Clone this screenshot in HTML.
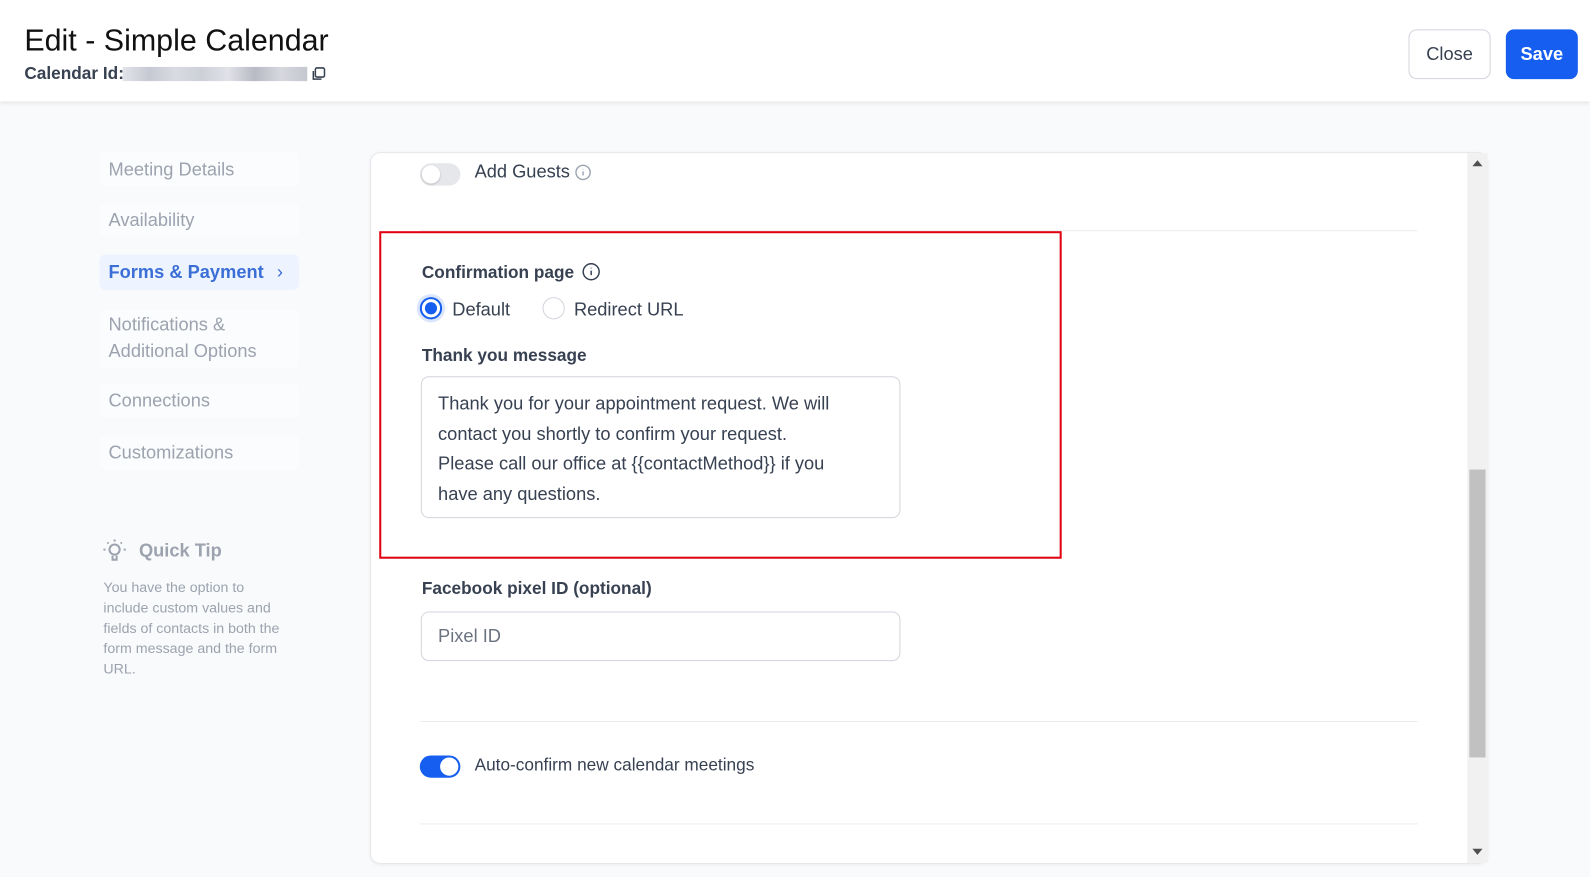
<!DOCTYPE html>
<html><head><style>
*{box-sizing:border-box;margin:0;padding:0}
body{width:1590px;height:877px;overflow:hidden;background:#f9fafb;font-family:"Liberation Sans",sans-serif;position:relative;color:#1f2937}
#w{position:absolute;left:0;top:0;width:1568px;height:865px;transform:scale(1.01403);transform-origin:0 0}
.hdr{position:absolute;left:0;top:0;width:1568px;height:100px;background:#fff;box-shadow:0 2px 4px rgba(0,0,0,.08)}
.abs{position:absolute}
.nav{position:absolute;left:98px;width:197px;background:#fbfcfd;border-radius:6px;color:#9ca3af;font-size:18px;padding:0 9px;line-height:26px}
.card{position:absolute;left:365px;top:150px;width:1102px;height:702px;background:#fff;border:1px solid #e5e7eb;border-radius:10px;box-shadow:0 1px 3px rgba(0,0,0,.06)}
.lbl{font-size:17px;color:#374151;font-weight:bold}
.txt{font-size:18px;color:#374151}
</style></head><body><div id="w">
<div class="hdr">
<div class="abs" style="left:24px;top:24px;font-size:30px;color:#111">Edit - Simple Calendar</div>
<div class="abs" style="left:24px;top:63px;font-size:17px;color:#374151;font-weight:bold">Calendar Id:</div>
<div class="abs" style="left:121px;top:66px;width:182px;height:14px;background:linear-gradient(90deg,#e3e4ea,#c6c9d3,#d9dbe2,#cdd0d8,#e1e2e8,#b8bac4,#d6d8de,#c5c7d0)"></div>
<svg class="abs" style="left:307px;top:66px" width="14" height="14" viewBox="0 0 14 14" fill="none" stroke="#374151" stroke-width="1.5"><rect x="4" y="1" width="9" height="9" rx="1.5"/><path d="M2 4v8h8"/></svg>
<div class="abs" style="left:1389px;top:29px;width:81px;height:49px;border:1px solid #d1d5db;border-radius:8px;font-size:18px;text-align:center;line-height:47px;color:#374151">Close</div>
<div class="abs" style="left:1485px;top:29px;width:71px;height:49px;background:#155eef;border-radius:8px;font-size:18px;font-weight:bold;text-align:center;line-height:49px;color:#fff">Save</div>
</div>
<div class="nav" style="top:150px;height:34px;line-height:34px">Meeting Details</div>
<div class="nav" style="top:200px;height:34px;line-height:34px">Availability</div>
<div class="nav" style="top:251px;height:35px;line-height:35px;background:#eef4ff;color:#3b6fd6;font-weight:bold">Forms &amp; Payment<span style="position:absolute;right:16px;font-weight:normal">›</span></div>
<div class="nav" style="top:305px;height:58px;padding-top:2px">Notifications &amp;<br>Additional Options</div>
<div class="nav" style="top:378px;height:34px;line-height:34px">Connections</div>
<div class="nav" style="top:429px;height:34px;line-height:34px">Customizations</div>
<div class="abs" style="left:100px;top:530px;font-size:18px;font-weight:bold;color:#9ca3af">
<svg width="26" height="26" viewBox="0 0 26 26" fill="none" stroke="#9ca3af" stroke-width="2" style="vertical-align:middle"><circle cx="13" cy="12" r="5"/><path d="M11 18v4h4v-4M13 2v2M4 12H2M24 12h-2M6 5l1 1M20 5l-1 1"/></svg>
<span style="vertical-align:middle;margin-left:6px">Quick Tip</span></div>
<div class="abs" style="left:102px;top:569px;width:200px;font-size:14px;line-height:20px;color:#9ca3af">You have the option to<br>include custom values and<br>fields of contacts in both the<br>form message and the form<br>URL.</div>
<div class="card">
<div class="abs" style="left:48px;top:10px;width:40px;height:22px;border-radius:11px;background:#e5e7eb"><div style="position:absolute;left:2px;top:2px;width:18px;height:18px;border-radius:50%;background:#fff;box-shadow:0 1px 2px rgba(0,0,0,.2)"></div></div>
<div class="abs txt" style="left:102px;top:8px">Add Guests</div>
<svg class="abs" style="left:201px;top:11px" width="16" height="16" viewBox="0 0 16 16" fill="none" stroke="#9ca3af" stroke-width="1.4"><circle cx="8" cy="8" r="7"/><path d="M8 7v4M8 4.5v.5"/></svg>
<div class="abs" style="left:48px;top:76px;width:984px;height:1px;background:#eaecf0"></div>
<div class="abs lbl" style="left:50px;top:108px">Confirmation page</div>
<svg class="abs" style="left:208px;top:108px" width="18" height="18" viewBox="0 0 16 16" fill="none" stroke="#374151" stroke-width="1.3"><circle cx="8" cy="8" r="7"/><path d="M8 7v4M8 4.5v.5"/></svg>
<div class="abs" style="left:48px;top:142px;width:22px;height:22px;border-radius:50%;border:2px solid #155eef;box-shadow:0 0 0 3px #dbe5fb;background:#fff"><div style="position:absolute;left:3px;top:3px;width:12px;height:12px;border-radius:50%;background:#155eef"></div></div>
<div class="abs txt" style="left:80px;top:144px">Default</div>
<div class="abs" style="left:169px;top:142px;width:22px;height:22px;border-radius:50%;border:1px solid #d1d5db"></div>
<div class="abs txt" style="left:200px;top:144px">Redirect URL</div>
<div class="abs lbl" style="left:50px;top:190px">Thank you message</div>
<div class="abs" style="left:49px;top:220px;width:473px;height:140px;border:1px solid #d1d5db;border-radius:8px;padding:12px 16px;font-size:18px;line-height:29.5px;color:#374151;white-space:nowrap">Thank you for your appointment request. We will<br>contact you shortly to confirm your request.<br>Please call our office at {{contactMethod}} if you<br>have any questions.</div>
<div class="abs lbl" style="left:50px;top:420px">Facebook pixel ID (optional)</div>
<div class="abs" style="left:49px;top:452px;width:473px;height:49px;border:1px solid #d1d5db;border-radius:8px;padding:0 16px;font-size:18px;line-height:47px;color:#6b7280">Pixel ID</div>
<div class="abs" style="left:48px;top:560px;width:984px;height:1px;background:#eaecf0"></div>
<div class="abs" style="left:48px;top:594px;width:40px;height:22px;border-radius:11px;background:#155eef"><div style="position:absolute;right:2px;top:2px;width:18px;height:18px;border-radius:50%;background:#fff"></div></div>
<div class="abs txt" style="left:102px;top:594px;font-size:17px">Auto-confirm new calendar meetings</div>
<div class="abs" style="left:48px;top:661px;width:984px;height:1px;background:#eaecf0"></div>
<div class="abs" style="left:1081px;top:0;width:20px;height:700px;background:#f1f1f1"></div>
<div class="abs" style="left:1083px;top:312px;width:16px;height:284px;background:#c1c1c1"></div>
<div class="abs" style="left:1086px;top:7px;width:0;height:0;border-left:5px solid transparent;border-right:5px solid transparent;border-bottom:6px solid #505050"></div>
<div class="abs" style="left:1086px;top:686px;width:0;height:0;border-left:5px solid transparent;border-right:5px solid transparent;border-top:6px solid #505050"></div>
</div>
<div class="abs" style="left:374px;top:228px;width:673px;height:323px;border:2px solid #e0000f"></div>
</div></body></html>
